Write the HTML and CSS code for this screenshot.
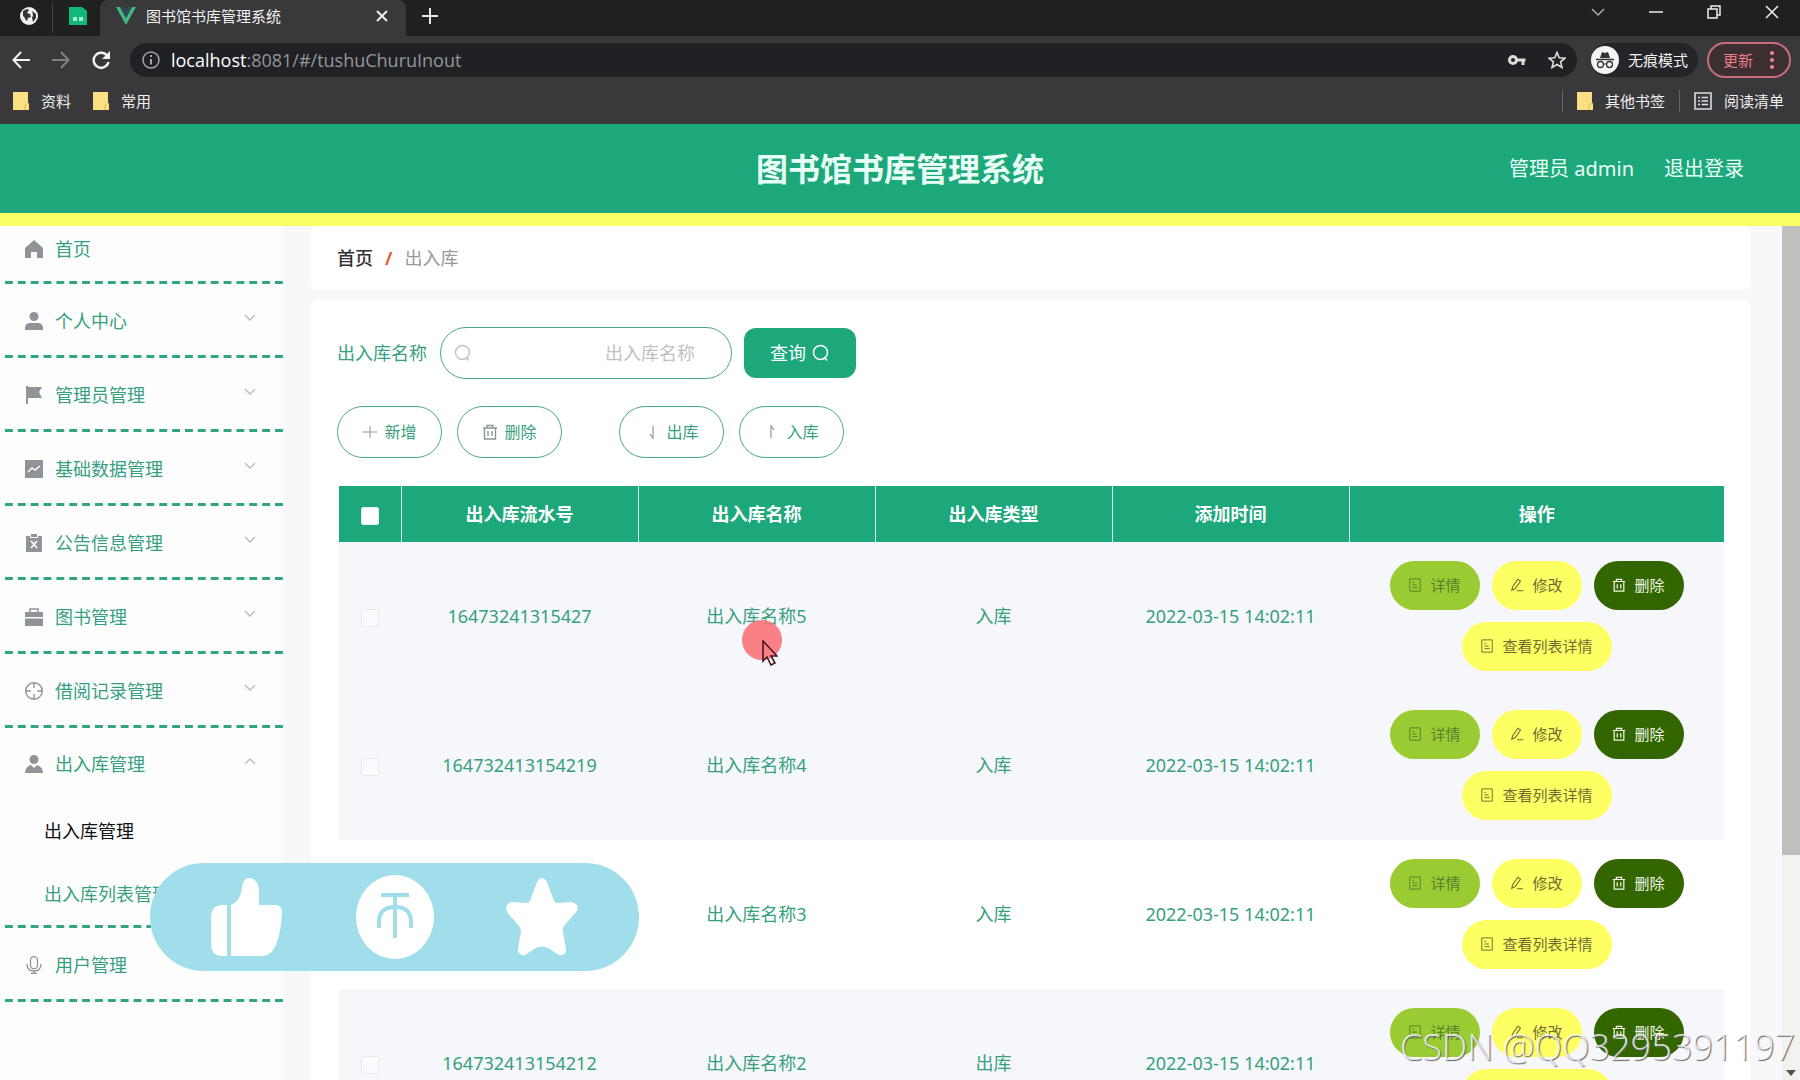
FILE: index.html
```html
<!DOCTYPE html>
<html lang="zh-CN">
<head>
<meta charset="utf-8">
<meta name="viewport" content="width=device-width, initial-scale=1">
<title>图书馆书库管理系统</title>
<link rel="stylesheet" href="styles.css">
</head>
<body>
<svg class="sprite" aria-hidden="true">
  <symbol id="search" viewBox="0 0 18 18"><circle cx="8.500" cy="8.500" r="7" fill="none" stroke="currentColor" stroke-width="1.500"/><path d="M12 13l3 3.500" fill="none" stroke="currentColor" stroke-width="1.500"/></symbol>
  <symbol id="trash" viewBox="0 0 16 16"><path d="M1 4h14M5 4V1.500h6V4M2.500 4v11h11V4M6 7v5M10 7v5" fill="none" stroke="currentColor" stroke-width="1.400"/></symbol>
  <symbol id="doc" viewBox="0 0 16 16"><path d="M2 1h12v14H2zM5 5h2M5 8h5M5 11h6" fill="none" stroke="currentColor" stroke-width="1.100"/></symbol>
  <symbol id="edit" viewBox="0 0 16 16"><path d="M2 14l1-4 6-8.500 3 2L6 12zM8 14.500h7" fill="none" stroke="currentColor" stroke-width="1.200"/></symbol>
  <symbol id="down" viewBox="0 0 12 8"><path d="M1 1l5 5 5-5" fill="none" stroke="currentColor" stroke-width="1.300"/></symbol>
  <symbol id="folder" viewBox="0 0 16 18"><path d="M0 0h15v10l1 2v6H0z" fill="#fbe083"/><path d="M12 18v-4l3-3" fill="none" stroke="#d9b64e"/></symbol>
</svg>

<header class="browser">
  <div class="tabs">
    <button class="pinned" aria-label="网页"><svg viewBox="0 0 18 18" width="18" height="18"><circle cx="9" cy="9" r="9" fill="#f1f1f1"/><path d="M3 4c3-2 5-2 6-1L7 6l3 1 1 3-3 1-1 3c-2-1-2-4-4-5zM12 4l4 3v4l-3 4-1-4 1-3z" fill="#333"/></svg></button>
    <span class="divider"></span>
    <button class="pinned doc-tab" aria-label="表格"><svg viewBox="0 0 18 18" width="18" height="18"><path d="M0 0h13l5 4v14H0z" fill="#12b877"/><path d="M4 10h4v4H4zM10 10h4v4h-4z" fill="#a8ecd0"/></svg></button>
    <div class="tab">
      <svg viewBox="0 0 20 18" width="20" height="18"><path d="M0 0h4l6 11 6-11h4L10 18z" fill="#42b883"/><path d="M4 0h4l2 4 2-4h4l-6 11z" fill="#35495e"/></svg>
      <span class="tab-title">图书馆书库管理系统</span>
      <button aria-label="关闭标签"><svg viewBox="0 0 12 12" width="12" height="12"><path d="M1 1l10 10M11 1L1 11" stroke="#eee" stroke-width="2"/></svg></button>
    </div>
    <button class="new-tab" aria-label="新标签"><svg viewBox="0 0 16 16" width="16" height="16"><path d="M8 0v16M0 8h16" stroke="#e8e8e8" stroke-width="2"/></svg></button>
    <div class="window-buttons">
      <button aria-label="标签列表"><svg viewBox="0 0 14 14" width="14" height="14"><path d="M1 4l6 6 6-6" fill="none" stroke="#aaa" stroke-width="1.500"/></svg></button>
      <button aria-label="最小化"><svg viewBox="0 0 14 14" width="14" height="14"><path d="M0 7h14" stroke="#eee" stroke-width="1.500"/></svg></button>
      <button aria-label="还原"><svg viewBox="0 0 14 14" width="14" height="14"><path d="M1 4h9v9H1zM4 4V1h9v9h-3" fill="none" stroke="#eee" stroke-width="1.500"/></svg></button>
      <button aria-label="关闭"><svg viewBox="0 0 14 14" width="14" height="14"><path d="M1 1l12 12M13 1L1 13" stroke="#eee" stroke-width="1.500"/></svg></button>
    </div>
  </div>
  <div class="toolbar">
    <button aria-label="后退"><svg viewBox="0 0 18 18" width="18" height="18"><path d="M18 9H2M9 1L1.500 9 9 17" fill="none" stroke="#f2f2f2" stroke-width="2"/></svg></button>
    <button aria-label="前进"><svg viewBox="0 0 18 18" width="18" height="18"><path d="M0 9h16M9 1l7.500 8L9 17" fill="none" stroke="#808080" stroke-width="2"/></svg></button>
    <button aria-label="刷新"><svg viewBox="0 0 18 18" width="18" height="18"><path d="M15 4.500A7.500 7.500 0 1 0 16.500 11" fill="none" stroke="#f2f2f2" stroke-width="2.400"/><path d="M18 0v8h-8z" fill="#f2f2f2"/></svg></button>
    <div class="address">
      <svg viewBox="0 0 18 18" width="18" height="18"><circle cx="9" cy="9" r="8" fill="none" stroke="#a5a5a8" stroke-width="1.500"/><path d="M9 8v5.500M9 4v2" stroke="#a5a5a8" stroke-width="2"/></svg>
      <span class="url"><b>localhost</b>:8081/#/tushuChuruInout</span>
      <svg viewBox="0 0 18 12" width="18" height="12"><circle cx="5" cy="6" r="3.500" fill="none" stroke="#ddd" stroke-width="3"/><path d="M8 6h9.500M15 6v5" stroke="#ddd" stroke-width="3"/></svg>
      <svg viewBox="0 0 18 18" width="18" height="18"><path d="M9 1.500l2.200 5.300 5.800.4-4.400 3.700 1.400 5.600L9 13.500l-5 3 1.400-5.600L1 7.200l5.800-.4z" fill="none" stroke="#ddd" stroke-width="1.600"/></svg>
    </div>
    <div class="incognito">
      <svg viewBox="0 0 28 28" width="28" height="28"><circle cx="14" cy="14" r="14" fill="#f4f4f4"/><path d="M9 12l2-6 3 1 3-1 2 6z" fill="#333"/><path d="M5 13.500h18" stroke="#333" stroke-width="1.500"/><circle cx="9.500" cy="18.500" r="3" fill="none" stroke="#333" stroke-width="1.300"/><circle cx="18.500" cy="18.500" r="3" fill="none" stroke="#333" stroke-width="1.300"/><path d="M12.500 18h3" stroke="#333"/></svg>
      <span>无痕模式</span>
    </div>
    <button class="update">更新<svg viewBox="0 0 4 18" width="4" height="18"><circle cx="2" cy="2" r="2" fill="#ee8791"/><circle cx="2" cy="9" r="2" fill="#ee8791"/><circle cx="2" cy="16" r="2" fill="#ee8791"/></svg></button>
  </div>
  <nav class="bookmarks">
    <a href="#"><svg width="16" height="18"><use href="#folder"/></svg>资料</a>
    <a href="#"><svg width="16" height="18"><use href="#folder"/></svg>常用</a>
    <span class="divider push"></span>
    <a href="#"><svg width="16" height="18"><use href="#folder"/></svg>其他书签</a>
    <span class="divider"></span>
    <a href="#"><svg viewBox="0 0 18 18" width="18" height="18"><path d="M1 1h16v16H1zM4 5.500h2M4 9h2M4 12.500h2M7.500 5.500H14M7.500 9H14M7.500 12.500H14" fill="none" stroke="#ddd" stroke-width="1.600"/></svg>阅读清单</a>
  </nav>
</header>

<header class="app-header">
  <h1>图书馆书库管理系统</h1>
  <div class="account"><span>管理员 admin</span><a href="#">退出登录</a></div>
</header>

<div class="app">
  <nav class="sidebar">
    <a class="item home" href="#"><svg viewBox="0 0 18 18"><path d="M9 0l9 8v10h-6v-6H6v6H0V8z"/></svg>首页</a>
    <a class="item" href="#"><svg viewBox="0 0 18 18"><circle cx="9" cy="4.500" r="4.500"/><path d="M0 18v-3q1-4 5-4h8q4 0 5 4v3z"/></svg>个人中心<svg class="arrow"><use href="#down"/></svg></a>
    <a class="item" href="#"><svg viewBox="0 0 18 18"><path d="M1 0h2v1h14l-3 5 3 6H3v6H1z"/></svg>管理员管理<svg class="arrow"><use href="#down"/></svg></a>
    <a class="item" href="#"><svg viewBox="0 0 18 18"><path d="M0 0h18v18H0z"/><path d="M3 12l4-4 3 2 5-4" fill="none" stroke="#fff" stroke-width="1.500"/></svg>基础数据管理<svg class="arrow"><use href="#down"/></svg></a>
    <a class="item" href="#"><svg viewBox="0 0 18 18"><path d="M1 2h4v2h8V2h4v16H1zM6 0h6v3H6z"/><path d="M6 7l6 7M12 7l-6 7" stroke="#fff" stroke-width="1.600"/></svg>公告信息管理<svg class="arrow"><use href="#down"/></svg></a>
    <a class="item" href="#"><svg viewBox="0 0 18 18"><path d="M0 4h18v5H0zM0 10.500h18V18H0z"/><path d="M5 4V1h8v3" fill="none" stroke="#909399" stroke-width="1.500"/></svg>图书管理<svg class="arrow"><use href="#down"/></svg></a>
    <a class="item" href="#"><svg viewBox="0 0 18 18"><g fill="none" stroke="#909399" stroke-width="1.400"><circle cx="9" cy="9" r="8.300"/><path d="M9 1v5M9 12v5M1 9h5M12 9h5"/></g></svg>借阅记录管理<svg class="arrow"><use href="#down"/></svg></a>
    <div class="group">
      <a class="item" href="#"><svg viewBox="0 0 18 18"><circle cx="9" cy="4.500" r="4.500"/><path d="M0 18q0-6 6-8l3 3 3-3q6 2 6 8z"/></svg>出入库管理<svg class="arrow up"><use href="#down"/></svg></a>
      <a class="sub active" href="#">出入库管理</a>
      <a class="sub" href="#">出入库列表管理</a>
    </div>
    <a class="item" href="#"><svg viewBox="0 0 18 18"><g fill="none" stroke="#909399" stroke-width="1.300"><rect x="5.500" y="0.700" width="7" height="12" rx="3.500"/><path d="M2 8q0 7 7 7t7-7M9 15v3M6 17.500h6"/></g></svg>用户管理<svg class="arrow"><use href="#down"/></svg></a>
  </nav>

  <main class="content">
    <nav class="breadcrumb panel"><a href="#">首页</a><i>/</i><span>出入库</span></nav>
    <section class="panel main-panel">
      <form class="search-form">
        <label for="q">出入库名称</label>
        <div class="search-box"><svg width="18" height="18"><use href="#search"/></svg><input id="q" type="text" placeholder="出入库名称"></div>
        <button class="query" type="button">查询<svg width="18" height="18"><use href="#search"/></svg></button>
      </form>
      <div class="actions">
        <button><svg viewBox="0 0 16 16"><path d="M8 2v12M1 8h14" stroke="currentColor"/></svg>新增</button>
        <button><svg><use href="#trash"/></svg>删除</button>
        <button class="second"><svg viewBox="0 0 16 16"><path d="M9 2v12L6 10" fill="none" stroke="currentColor" stroke-width="1.200"/></svg>出库</button>
        <button><svg viewBox="0 0 16 16"><path d="M7 14V2l3 4" fill="none" stroke="currentColor" stroke-width="1.200"/></svg>入库</button>
      </div>
      <table>
        <colgroup><col class="c-check"><col class="c-data"><col class="c-data"><col class="c-data"><col class="c-data"><col></colgroup>
        <thead><tr><th><input type="checkbox" aria-label="全选"></th><th>出入库流水号</th><th>出入库名称</th><th>出入库类型</th><th>添加时间</th><th>操作</th></tr></thead>
        <tbody>
          <tr class="shade"><td><input type="checkbox" aria-label="选择 5"></td><td>16473241315427</td><td>出入库名称5</td><td>入库</td><td>2022-03-15 14:02:11</td><td><div class="ops"><button class="detail"><svg><use href="#doc"/></svg>详情</button><button><svg><use href="#edit"/></svg>修改</button><button class="delete"><svg><use href="#trash"/></svg>删除</button><button class="wide"><svg><use href="#doc"/></svg>查看列表详情</button></div></td></tr>
          <tr class="shade"><td><input type="checkbox" aria-label="选择 4"></td><td>164732413154219</td><td>出入库名称4</td><td>入库</td><td>2022-03-15 14:02:11</td><td><div class="ops"><button class="detail"><svg><use href="#doc"/></svg>详情</button><button><svg><use href="#edit"/></svg>修改</button><button class="delete"><svg><use href="#trash"/></svg>删除</button><button class="wide"><svg><use href="#doc"/></svg>查看列表详情</button></div></td></tr>
          <tr><td></td><td></td><td>出入库名称3</td><td>入库</td><td>2022-03-15 14:02:11</td><td><div class="ops"><button class="detail"><svg><use href="#doc"/></svg>详情</button><button><svg><use href="#edit"/></svg>修改</button><button class="delete"><svg><use href="#trash"/></svg>删除</button><button class="wide"><svg><use href="#doc"/></svg>查看列表详情</button></div></td></tr>
          <tr class="shade"><td><input type="checkbox" aria-label="选择 2"></td><td>164732413154212</td><td>出入库名称2</td><td>出库</td><td>2022-03-15 14:02:11</td><td><div class="ops"><button class="detail"><svg><use href="#doc"/></svg>详情</button><button><svg><use href="#edit"/></svg>修改</button><button class="delete"><svg><use href="#trash"/></svg>删除</button><button class="wide"><svg><use href="#doc"/></svg>查看列表详情</button></div></td></tr>
        </tbody>
      </table>
    </section>
  </main>
  <div class="scrollbar"><div class="thumb"></div><svg viewBox="0 0 10 6" width="10" height="6"><path d="M0 0h10L5 6z" fill="#505050"/></svg></div>
</div>

<div class="pointer"><svg viewBox="0 0 16 26" width="16" height="26"><path d="M1 1v20l4-4 4 8 4-2-4-7h6z" fill="none" stroke="#4a1520" stroke-width="1.600"/></svg></div>
<div class="reactions">
  <svg viewBox="0 0 72 78" width="72" height="78"><path d="M16 27v51h-6Q0 77 0 66V38Q1 27 12 27zM20 27Q30 23 31 9 32 0 39 0q8 1 9 12v15h16q8 0 7 8-1 19-6 32-4 10-13 11H20z" fill="#fff"/></svg>
  <svg viewBox="0 0 78 84" width="78" height="84"><ellipse cx="39" cy="42" rx="39" ry="42" fill="#fff"/><path d="M25 20h28M39 20v43M23 53v-6q0-15 16-15t16 15v6" fill="none" stroke="#a0deec" stroke-width="4"/></svg>
  <svg viewBox="0 0 72 78" width="72" height="78"><path d="M31 4q5-8 10 0l7 19q1 2 4 2l13-1q9 2 6 9L58 48q-2 3-1 6l3 17q0 7-7 6L42 70q-6-3-12 0l-11 7q-7 1-7-6l3-18q0-3-2-5L1 34q-3-8 5-10l14 1q3 0 4-2z" fill="#fff"/></svg>
</div>
<div class="watermark">CSDN @QQ3295391197</div>
</body>
</html>
```
FILE: styles.css
```css
* { box-sizing: border-box; }

body {
  margin: 0;
  height: 100vh;
  display: flex;
  flex-direction: column;
  overflow: hidden;
  position: relative;
  font: 18px/24px "Noto Sans", "Noto Sans CJK SC", sans-serif;
  color: #36a07e;
  background: #f8f8fb;
}

a { color: inherit; text-decoration: none; }
button { font: inherit; color: inherit; border: 0; background: none; padding: 0; }
svg { flex: none; display: block; }
.sprite { position: absolute; width: 0; height: 0; }

/* Browser window */
.browser {
  flex: none;
  font-size: 15px;
  color: #f0f0f0;
  background: #39383b;
}
.browser > div, .browser > nav { display: flex; align-items: center; }
.divider { width: 1px; height: 22px; background: #66666a; }

.tabs { height: 36px; background: #1f2020; padding-left: 20px; }
.tabs .divider { height: 30px; margin: 0 16px 0 14px; background: #444; }
.doc-tab { margin-right: 13px; }
.pinned { padding-bottom: 4px; }
.tab {
  width: 306px;
  height: 36px;
  padding: 0 18px 5px 16px;
  display: flex;
  align-items: center;
  gap: 10px;
  background: #39383b;
  border-radius: 8px 8px 0 0;
}
.tab-title { flex: 1; }
.new-tab { margin-left: 16px; padding-bottom: 5px; }
.window-buttons { display: flex; gap: 44px; margin: 0 21px 12px auto; }

.toolbar { height: 48px; padding: 0 9px 0 12px; gap: 22px; }
.address {
  flex: 1;
  height: 34px;
  margin-left: -2px;
  padding: 0 11px 0 12px;
  border-radius: 17px;
  display: flex;
  align-items: center;
  gap: 22px;
  background: #202124;
}
.url { flex: 1; margin-left: -11px; font-family: "Open Sans", sans-serif; font-size: 18px; color: #96969a; }
.url b { font-weight: 400; color: #fff; }
.incognito {
  height: 34px;
  margin-left: -8px;
  padding-right: 10px;
  border-radius: 17px;
  display: flex;
  align-items: center;
  gap: 9px;
  background: #252527;
}
.update {
  width: 84px;
  height: 36px;
  margin-left: -13px;
  padding: 0 15px 0 14px;
  border: 2px solid #c96d78;
  border-radius: 18px;
  display: flex;
  align-items: center;
  justify-content: space-between;
  color: #ee7b87;
  background: #3b2f32;
}

.bookmarks { height: 40px; padding: 0 16px 6px 13px; gap: 14px; }
.bookmarks a { display: flex; align-items: center; gap: 12px; }
.bookmarks a + a { margin-left: 8px; }
.push { margin-left: auto; }

/* Application header */
.app-header {
  flex: none;
  height: 102px;
  display: grid;
  grid-template-columns: 1fr auto 1fr;
  align-items: center;
  color: #e9fff5;
  background: #1ca87b;
  border-bottom: 13px solid #faff63;
}
h1 { grid-column: 2; margin: 0; font-size: 32px; line-height: 40px; }
.account { display: flex; justify-content: flex-end; gap: 30px; padding-right: 56px; font-size: 20px; }

.app { flex: 1; min-height: 0; display: flex; overflow: hidden; }

/* Sidebar */
.sidebar { flex: none; width: 283px; background: #fdfdfe; }
.item {
  height: 74px;
  padding: 0 27px 0 25px;
  display: flex;
  align-items: center;
  gap: 12px;
}
.sidebar > * {
  background: linear-gradient(90deg, transparent 38%, #31a582 38%) 0 100% / calc(100% / 22) 3px repeat-x;
}
.item svg { width: 18px; height: 18px; fill: #909399; }
.item .arrow { width: 12px; height: 8px; margin: 0 0 6px auto; color: #b5b8bd; fill: none; }
.item .up { transform: rotate(180deg); }
.home { height: 58px; padding-bottom: 12px; }
.group { padding-bottom: 2px; }
.group .item { height: 72px; }
.sub { display: block; padding-left: 44px; line-height: 63px; }
.active { color: #111; }

/* Content */
.content { flex: 1; min-width: 0; padding: 0 32px 0 28px; }
.panel { padding: 0 26px 0 28px; background: #fff; border-radius: 6px; }
.breadcrumb { height: 64px; padding-left: 26px; display: flex; align-items: center; gap: 12px; color: #999; }
.breadcrumb a { color: #303133; font-weight: 500; }
.breadcrumb i { font-style: normal; font-weight: 700; color: #e2613f; }
.main-panel { margin-top: 10px; padding-top: 27px; }

.search-form { display: flex; align-items: center; height: 52px; margin-left: -2px; }
.search-box { position: relative; width: 292px; margin: 0 12px 0 13px; }
.search-box svg { position: absolute; left: 14px; top: 17px; color: #c0c4cc; }
.search-box input {
  width: 100%;
  height: 52px;
  padding: 0 36px 0 40px;
  border: 1px solid #4aa98c;
  border-radius: 26px;
  font: inherit;
  text-align: right;
  background: #fff;
}
.search-box input::placeholder { color: #bfc1c5; opacity: 1; }
.query {
  width: 112px;
  height: 50px;
  border-radius: 12px;
  display: flex;
  align-items: center;
  justify-content: center;
  gap: 6px;
  color: #fff;
  background: #1ca87b;
}

.actions { display: flex; gap: 15px; margin: 27px 0 28px -2px; }
.actions button {
  width: 105px;
  height: 52px;
  border: 1px solid #4aa98c;
  border-radius: 26px;
  display: flex;
  align-items: center;
  justify-content: center;
  gap: 6px;
  font-size: 16px;
}
.actions svg { width: 16px; height: 16px; color: #8c9993; }
.actions .second { margin-left: 42px; }

table { width: 100%; table-layout: fixed; border-collapse: collapse; text-align: center; }
.c-check { width: 62px; }
.c-data { width: 237px; }
th { height: 56px; padding: 0; color: #fff; background: #1ca87b; }
th + th { border-left: 1px solid #d5f3e7; }
td { height: 149px; padding: 0 0 2px; }
.shade { background: #f6f7fa; }

input[type="checkbox"] {
  appearance: none;
  width: 18px;
  height: 18px;
  margin: 0;
  display: inline-block;
  vertical-align: middle;
  border: 1px solid #e6e8ec;
  border-radius: 2px;
  background: #fff;
}
td input[type="checkbox"] { background: #fbfbfc; }

.ops { display: flex; flex-wrap: wrap; justify-content: center; gap: 12px; }
.ops button {
  width: 90px;
  height: 49px;
  border-radius: 25px;
  display: flex;
  align-items: center;
  justify-content: center;
  gap: 8px;
  font-size: 15px;
  color: #716e35;
  background: #fdff62;
}
.ops svg { width: 14px; height: 14px; }
.ops .detail { color: #55802f; background: #99cc33; }
.ops .delete { color: #f0f8e8; background: #336600; }
.ops .wide { width: 150px; }

.scrollbar {
  flex: none;
  width: 18px;
  display: flex;
  flex-direction: column;
  align-items: center;
  justify-content: space-between;
  padding-bottom: 4px;
  background: #f2f2f0;
}
.thumb { width: 100%; height: 74%; background: #bfbfbd; }

/* Layers over the page */
.pointer {
  position: absolute;
  left: 742px;
  top: 620px;
  width: 40px;
  height: 40px;
  padding: 20px 0 0 20px;
  border-radius: 50%;
  background: #fa7378e6;
}
.reactions {
  position: absolute;
  left: 150px;
  bottom: 109px;
  width: 489px;
  height: 108px;
  padding: 0 61px;
  border-radius: 54px;
  display: flex;
  align-items: center;
  justify-content: space-between;
  background: #a0deec;
}
.watermark {
  position: absolute;
  right: 5px;
  bottom: 11px;
  font: 300 36px/44px "Open Sans", sans-serif;
  color: #ffffffcc;
  text-shadow: 1px 1px 1px #666;
}
```
